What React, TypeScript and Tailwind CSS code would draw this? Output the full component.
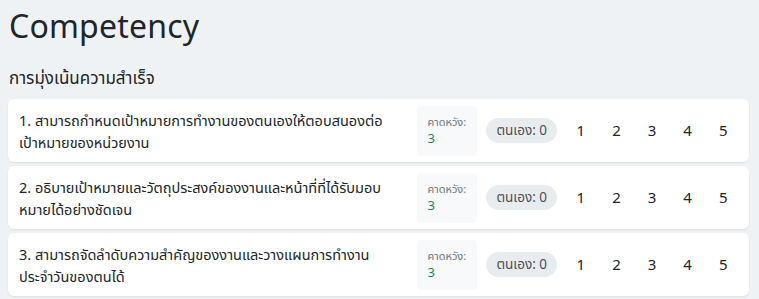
const FONT = { fontFamily: '"Noto Sans", "Noto Sans Thai", "Loma", "Garuda", "Norasi", sans-serif' };

const ITEMS = [
  ["1. สามารถกำหนดเป้าหมายการทำงานของตนเองให้ตอบสนองต่อ", "เป้าหมายของหน่วยงาน"],
  ["2. อธิบายเป้าหมายและวัตถุประสงค์ของงานและหน้าที่ที่ได้รับมอบ", "หมายได้อย่างชัดเจน"],
  ["3. สามารถจัดลำดับความสำคัญของงานและวางแผนการทำงาน", "ประจำวันของตนได้"],
];

export default function App() {
  return (
    <div className="min-h-[299px] w-[759px] overflow-hidden bg-[#eff2f5] text-[#212529]" style={FONT}>
      <div className="pl-[8px] pr-[10px] pt-[6px]">
        <h1 className="pl-[1px] text-[32px] leading-[40px] font-normal tracking-[0.2px]">Competency</h1>
        <h2 className="mt-[20px] pl-[1px] text-[17px] leading-[24px]">การมุ่งเน้นความสำเร็จ</h2>
        <div className="mt-[9px] flex flex-col gap-[4px]">
          {ITEMS.map(([a, b]) => (
            <div key={a} className="flex h-[63px] items-center rounded-[6px] bg-white pl-[11px] pr-[8px] shadow-[0_1px_2px_rgba(0,0,0,0.08)]">
              <div className="w-[400px] text-[14.5px] leading-[22px] whitespace-nowrap">
                {a}
                <br />
                {b}
              </div>
              <div className="ml-auto flex items-center">
                <div className="flex h-[50px] w-[60px] flex-col justify-center rounded-[4px] bg-[#f8f9fa] pl-[10px]">
                  <span className="text-[11px] leading-[15px] text-[#6c757d]">คาดหวัง:</span>
                  <span className="text-[13px] leading-[18px] text-[#198754]">3</span>
                </div>
                <div className="ml-[9px] flex h-[25px] items-center whitespace-nowrap rounded-full bg-[#e9ecef] px-[10px] text-[13.5px] text-[#495057]">ตนเอง: 0</div>
                <div className="ml-[6px] flex">
                  {[1, 2, 3, 4, 5].map((n) => (
                    <span key={n} className="flex h-[30px] w-[35.6px] items-center justify-center text-[15px]">{n}</span>
                  ))}
                </div>
              </div>
            </div>
          ))}
        </div>
      </div>
    </div>
  );
}
